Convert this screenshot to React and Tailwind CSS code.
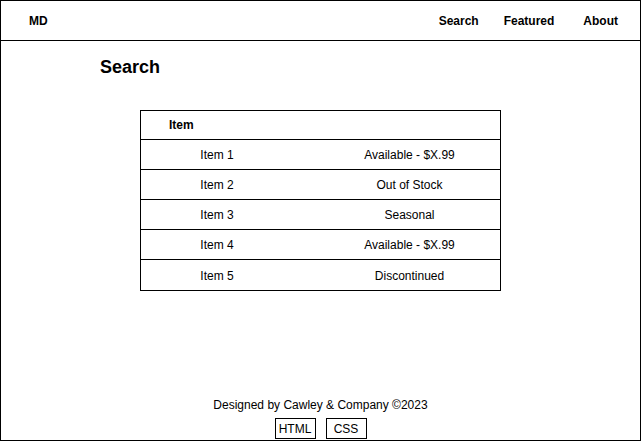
import React from 'react';

const rows = [
  { item: 'Item 1', status: 'Available - $X.99' },
  { item: 'Item 2', status: 'Out of Stock' },
  { item: 'Item 3', status: 'Seasonal' },
  { item: 'Item 4', status: 'Available - $X.99' },
  { item: 'Item 5', status: 'Discontinued' },
];

export default function App() {
  return (
    <div
      className="w-[641px] h-[441px] border border-black bg-white text-black flex flex-col text-[12px]"
      style={{ fontFamily: '"Liberation Sans", Arial, sans-serif' }}
    >
      <header className="h-[40px] border-b border-black flex items-center font-bold shrink-0">
        <div className="ml-[28px]">MD</div>
        <nav className="ml-auto flex items-center mr-[22px]">
          <a className="mr-[25px]">Search</a>
          <a className="mr-[29px]">Featured</a>
          <a>About</a>
        </nav>
      </header>

      <main className="flex-1">
        <h1 className="ml-[99px] mt-[16px] text-[18px] leading-[21px] font-bold">Search</h1>
        <div className="ml-[139px] mt-[32px] w-[361px] border border-black divide-y divide-black">
          <div className="h-[29px] flex items-center font-bold">
            <div className="pl-[28px]">Item</div>
          </div>
          {rows.map((r) => (
            <div key={r.item} className="h-[30px] pt-[1px] grid grid-cols-[152px_1fr] items-center">
              <div className="text-center">{r.item}</div>
              <div className="text-center pl-[26px]">{r.status}</div>
            </div>
          ))}
        </div>
      </main>

      <footer className="flex flex-col items-center pb-[1px]">
        <p className="leading-[14px]">Designed by Cawley &amp; Company ©2023</p>
        <div className="flex gap-[10px] mt-[6px]">
          <span className="w-[41px] h-[21px] border border-black flex items-center justify-center">HTML</span>
          <span className="w-[41px] h-[21px] border border-black flex items-center justify-center">CSS</span>
        </div>
      </footer>
    </div>
  );
}
